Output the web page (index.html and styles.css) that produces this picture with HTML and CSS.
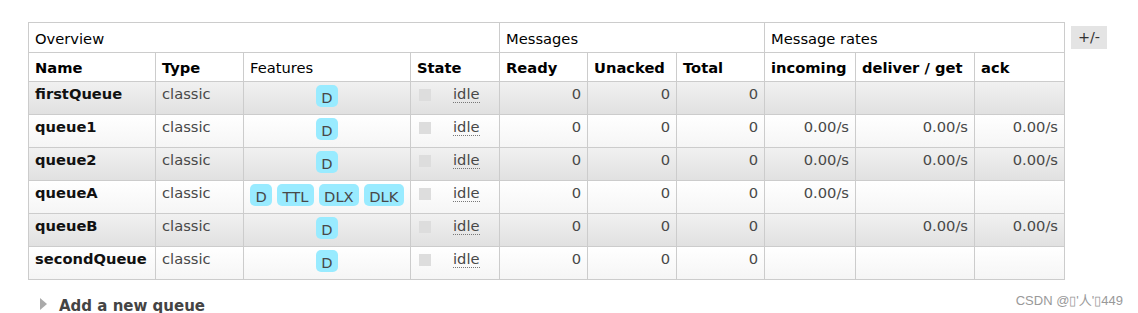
FILE: index.html
```html
<!DOCTYPE html>
<html>
<head>
<meta charset="utf-8">
<link rel="stylesheet" href="styles.css">
</head>
<body>
<main class="page">
  <div class="table-wrap">
    <table class="list">
      <colgroup>
        <col class="c-name"><col class="c-type"><col class="c-feat"><col class="c-state">
        <col class="c-ready"><col class="c-unacked"><col class="c-total">
        <col class="c-in"><col class="c-deliver"><col class="c-ack">
      </colgroup>
      <thead>
        <tr class="group-row">
          <th colspan="4">Overview</th>
          <th colspan="3">Messages</th>
          <th colspan="3">Message rates</th>
        </tr>
        <tr class="head-row">
          <th>Name</th><th>Type</th><th class="light">Features</th><th>State</th>
          <th>Ready</th><th>Unacked</th><th>Total</th>
          <th>incoming</th><th>deliver / get</th><th>ack</th>
        </tr>
      </thead>
      <tbody>
        <tr class="alt1">
          <td class="name">firstQueue</td><td>classic</td>
          <td class="feat"><span class="badge">D</span></td>
          <td><span class="state"><span class="sq"></span><span class="idle">idle</span></span></td>
          <td class="num">0</td><td class="num">0</td><td class="num">0</td>
          <td class="num"></td><td class="num"></td><td class="num"></td>
        </tr>
        <tr class="alt2">
          <td class="name">queue1</td><td>classic</td>
          <td class="feat"><span class="badge">D</span></td>
          <td><span class="state"><span class="sq"></span><span class="idle">idle</span></span></td>
          <td class="num">0</td><td class="num">0</td><td class="num">0</td>
          <td class="num">0.00/s</td><td class="num">0.00/s</td><td class="num">0.00/s</td>
        </tr>
        <tr class="alt1">
          <td class="name">queue2</td><td>classic</td>
          <td class="feat"><span class="badge">D</span></td>
          <td><span class="state"><span class="sq"></span><span class="idle">idle</span></span></td>
          <td class="num">0</td><td class="num">0</td><td class="num">0</td>
          <td class="num">0.00/s</td><td class="num">0.00/s</td><td class="num">0.00/s</td>
        </tr>
        <tr class="alt2">
          <td class="name">queueA</td><td>classic</td>
          <td class="feat"><span class="badge">D</span> <span class="badge">TTL</span> <span class="badge">DLX</span> <span class="badge">DLK</span></td>
          <td><span class="state"><span class="sq"></span><span class="idle">idle</span></span></td>
          <td class="num">0</td><td class="num">0</td><td class="num">0</td>
          <td class="num">0.00/s</td><td class="num"></td><td class="num"></td>
        </tr>
        <tr class="alt1">
          <td class="name">queueB</td><td>classic</td>
          <td class="feat"><span class="badge">D</span></td>
          <td><span class="state"><span class="sq"></span><span class="idle">idle</span></span></td>
          <td class="num">0</td><td class="num">0</td><td class="num">0</td>
          <td class="num"></td><td class="num">0.00/s</td><td class="num">0.00/s</td>
        </tr>
        <tr class="alt2">
          <td class="name">secondQueue</td><td>classic</td>
          <td class="feat"><span class="badge">D</span></td>
          <td><span class="state"><span class="sq"></span><span class="idle">idle</span></span></td>
          <td class="num">0</td><td class="num">0</td><td class="num">0</td>
          <td class="num"></td><td class="num"></td><td class="num"></td>
        </tr>
      </tbody>
    </table>
    <span class="plus-minus">+/-</span>
  </div>
  <div class="section-head">
    <span class="tri"></span>
    <h2 class="section-title">Add a new queue</h2>
  </div>
</main>
<div class="watermark">CSDN @▯'人'▯449</div>
</body>
</html>
```
FILE: styles.css
```css
html, body {
  margin: 0;
  padding: 0;
  background: #fff;
}
body {
  font-family: "DejaVu Sans", Verdana, sans-serif;
  font-size: 14.7px;
  color: #484848;
  width: 1138px;
  height: 313px;
  overflow: hidden;
  position: relative;
}
.page {
  padding: 22px 0 0 28px;
}
.table-wrap {
  display: flex;
  align-items: flex-start;
  gap: 6px;
}
table.list {
  border-collapse: collapse;
  table-layout: fixed;
  width: 1036px;
  border: 1px solid #ccc;
}
.c-name { width: 127px; }
.c-type { width: 88px; }
.c-feat { width: 167px; }
.c-state { width: 89px; }
.c-ready { width: 88px; }
.c-unacked { width: 89px; }
.c-total { width: 88px; }
.c-in { width: 91px; }
.c-deliver { width: 119px; }
.c-ack { width: 90px; }

table.list th,
table.list td {
  border: 1px solid #ccc;
  padding: 0 6px;
  white-space: nowrap;
  overflow: hidden;
}
table.list th {
  text-align: left;
  vertical-align: bottom;
  color: #000;
  padding-bottom: 5px;
}
.group-row { height: 30px; }
.group-row th { font-weight: normal; padding-bottom: 5px; }
.head-row { height: 29px; }
.head-row th { font-weight: bold; padding-bottom: 5px; }
.head-row th.light { font-weight: normal; }

table.list td {
  vertical-align: top;
  padding-top: 3px;
  padding-bottom: 0;
  line-height: 18px;
}
tbody tr { height: 33px; }
.alt1 { background: linear-gradient(to bottom, #f1f1f1, #e0e0e0); }
.alt2 { background: linear-gradient(to bottom, #ffffff, #f5f5f5); }

td.name { font-weight: bold; color: #111; }
td.num { text-align: right; }
td.feat { text-align: center; padding-top: 3px; line-height: normal; }

.badge {
  display: inline-block;
  background: #99ebff;
  border-radius: 5px;
  padding: 4px 5.5px 1px;
  color: #484848;
  line-height: 17px;
}
.state {
  display: inline-flex;
  align-items: flex-start;
}
.sq {
  width: 12px;
  height: 12px;
  background: #dddddd;
  margin: 4px 0 0 2px;
}
.idle {
  margin-left: 22px;
  border-bottom: 1px dotted #777;
  line-height: 16px;
  margin-top: 1px;
}
.plus-minus {
  display: inline-block;
  margin-top: 4px;
  width: 36px;
  height: 23px;
  line-height: 23px;
  text-align: center;
  background: #e4e4e4;
  color: #333;
  font-size: 14.4px;
}
.section-head {
  display: flex;
  align-items: flex-start;
  gap: 12px;
  margin: 17px 0 0 12px;
}
.tri {
  width: 0;
  height: 0;
  margin-top: 1px;
  border-top: 6px solid transparent;
  border-bottom: 6px solid transparent;
  border-left: 7px solid #aaa;
}
.section-title {
  margin: 0;
  font-size: 15px;
  font-weight: bold;
  color: #444;
  line-height: 18px;
}
.watermark {
  position: absolute;
  right: 15px;
  top: 290px;
  font-family: "Liberation Sans", Arial, "Noto Sans CJK SC", sans-serif;
  font-size: 13px;
  color: #999;
}
```
